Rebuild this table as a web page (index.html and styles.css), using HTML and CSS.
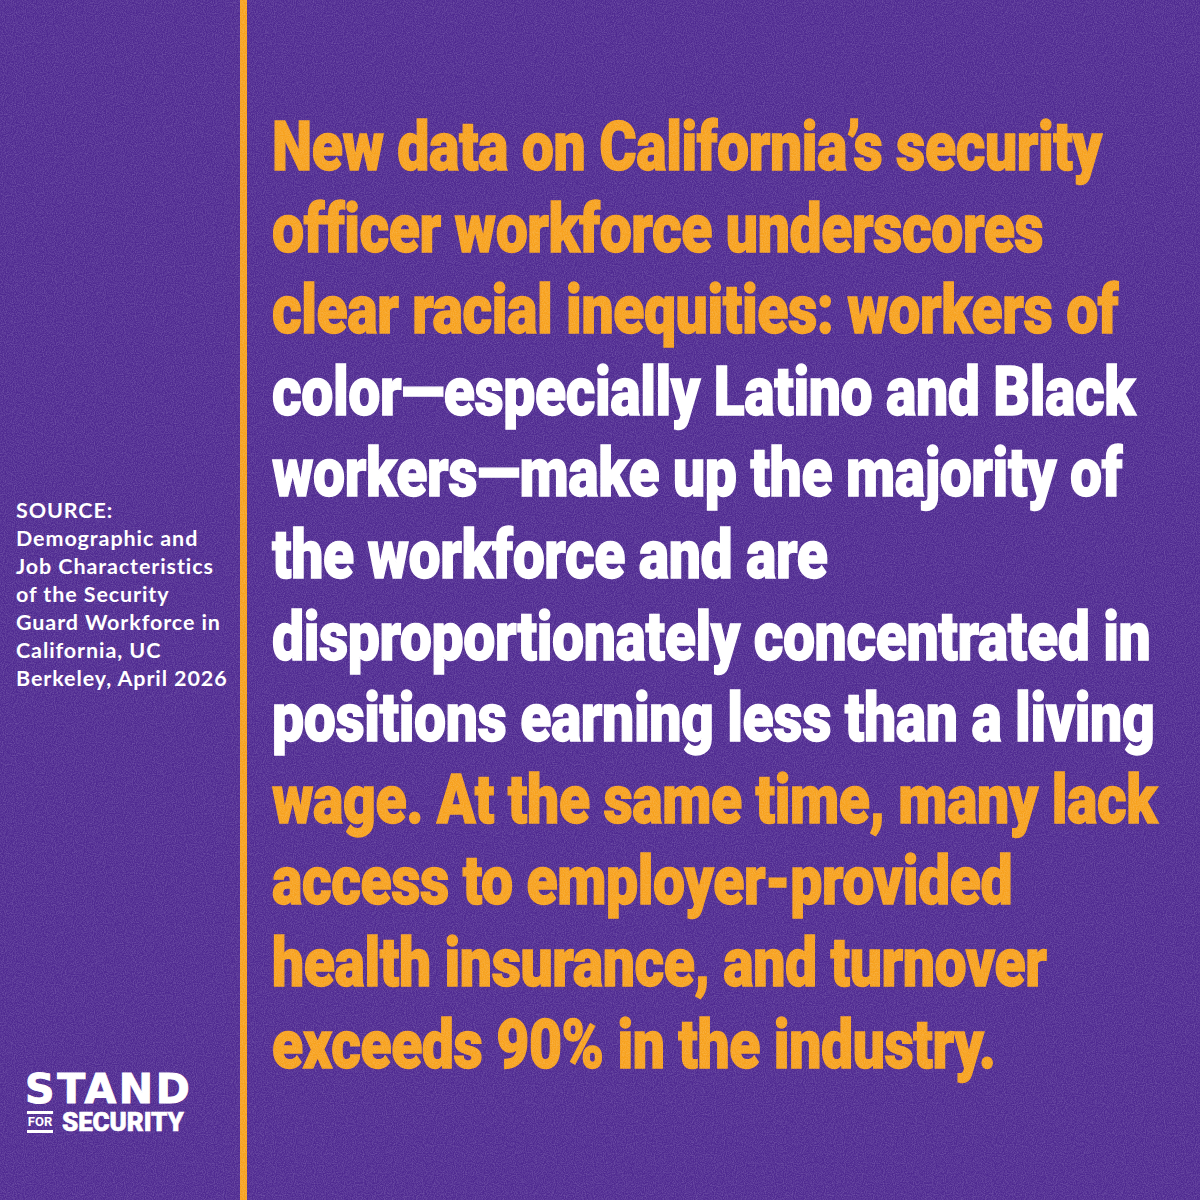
FILE: index.html
```html
<!DOCTYPE html>
<html lang="en">
<head>
<meta charset="utf-8">
<title>Stand for Security</title>
<link rel="stylesheet" href="styles.css">
</head>
<body>
<div class="page">
  <aside class="side">
    <p class="source">SOURCE:<br>Demographic and<br>Job Characteristics<br>of the Security<br>Guard Workforce in<br>California, UC<br>Berkeley, April 2026</p>
    <div class="logo">
      <div class="logo-stand">STAND</div>
      <div class="logo-row">
        <span class="logo-for">FOR</span>
        <span class="logo-security">SECURITY</span>
      </div>
    </div>
  </aside>
  <div class="divider"></div>
  <main class="main">
    <div class="statement">
      <div class="line orange">New data on California’s security</div>
      <div class="line orange">officer workforce underscores</div>
      <div class="line orange">clear racial inequities: workers of</div>
      <div class="line white">color—especially Latino and Black</div>
      <div class="line white">workers—make up the majority of</div>
      <div class="line white">the workforce and are</div>
      <div class="line white">disproportionately concentrated in</div>
      <div class="line white">positions earning less than a living</div>
      <div class="line orange">wage. At the same time, many lack</div>
      <div class="line orange">access to employer-provided</div>
      <div class="line orange">health insurance, and turnover</div>
      <div class="line orange">exceeds 90% in the industry.</div>
    </div>
  </main>
  <svg class="grain" width="1200" height="1200" aria-hidden="true">
    <filter id="noise">
      <feTurbulence type="fractalNoise" baseFrequency="0.9" numOctaves="2" seed="4"/>
      <feColorMatrix type="matrix" values="0 0 0 0 1  0 0 0 0 1  0 0 0 0 1  0 0 0 -2.2 1.45"/>
    </filter>
    <rect width="1200" height="1200" filter="url(#noise)"/>
  </svg>
</div>
</body>
</html>
```
FILE: styles.css
```css
html, body {
  margin: 0;
  padding: 0;
  background: #4f2a91;
}
.page {
  position: relative;
  width: 1200px;
  height: 1200px;
  display: flex;
  flex-direction: row;
  background: #4f2a91;
  overflow: hidden;
}
.side {
  width: 240px;
  flex: none;
  display: flex;
  flex-direction: column;
  padding: 496px 0 0 16px;
  box-sizing: border-box;
}
.source {
  margin: 0;
  font-family: Lato, "Open Sans", sans-serif;
  font-weight: 700;
  font-size: 21.5px;
  line-height: 28px;
  letter-spacing: 0.9px;
  color: #ffffff;
}
.logo {
  margin-top: 381px;
  margin-left: 9px;
  color: #ffffff;
}
.logo-stand {
  font-family: "DejaVu Sans", sans-serif;
  font-weight: 700;
  font-size: 41px;
  line-height: 32px;
  letter-spacing: 2.6px;
  -webkit-text-stroke: 1px #ffffff;
}
.logo-row {
  display: flex;
  flex-direction: row;
  align-items: center;
  gap: 9px;
  margin-top: 6px;
  margin-left: 2px;
}
.logo-for {
  font-family: Roboto, sans-serif;
  font-weight: 700;
  font-size: 13px;
  line-height: 14px;
  width: 26px;
  text-align: center;
  border-top: 3px solid #ffffff;
  border-bottom: 3px solid #ffffff;
  padding: 1px 0;
}
.logo-security {
  font-family: Roboto, sans-serif;
  font-weight: 900;
  font-size: 26px;
  line-height: 22px;
  letter-spacing: -0.1px;
  -webkit-text-stroke: 0.6px #ffffff;
}
.divider {
  width: 7px;
  flex: none;
  background: #f7a11d;
}
.main {
  flex: 1;
  padding: 107px 0 0 25px;
}
.statement {
  width: 1100px;
  transform: scaleX(0.84);
  transform-origin: left top;
  font-family: Roboto, sans-serif;
  font-weight: 900;
  font-size: 68px;
  line-height: 81.6px;
  letter-spacing: -0.5px;
  white-space: nowrap;
}
.line.orange {
  color: #f7a11d;
  -webkit-text-stroke: 1.4px #f7a11d;
}
.line.white {
  color: #ffffff;
  -webkit-text-stroke: 1.4px #ffffff;
}
.grain {
  position: absolute;
  left: 0;
  top: 0;
  opacity: 0.16;
  pointer-events: none;
}
```
